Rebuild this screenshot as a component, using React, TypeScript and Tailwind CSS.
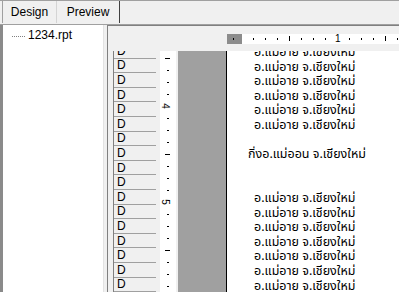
import React from "react";

const ROW_H = "h-[14.6px]";
const THAI = "อ.แม่อาย จ.เชียงใหม่";

function VRuler() {
  // tick positions relative to top of ruler (ruler starts at y=50)
  const ticks: { y: number; kind: "s" | "l" | "n"; label?: string }[] = [];
  for (let k = 0; k < 21; k++) {
    const y = 7 + k * 12;
    if (k % 8 === 0) ticks.push({ y, kind: "l" });
    else if (k % 8 === 4) ticks.push({ y, kind: "n", label: k === 4 ? "4" : k === 12 ? "5" : "6" });
    else ticks.push({ y, kind: "s" });
  }
  return (
    <div className="relative w-[16px] shrink-0 bg-white">
      {ticks.map((t, i) =>
        t.kind === "n" ? (
          <span
            key={i}
            className="absolute left-[2px] text-[10px] leading-none text-black rotate-90"
            style={{ top: t.y - 5 }}
          >
            {t.label}
          </span>
        ) : (
          <span
            key={i}
            className={`absolute h-px bg-black ${t.kind === "l" ? "left-[5px] w-[5px]" : "left-[7px] w-[2px]"}`}
            style={{ top: t.y }}
          />
        )
      )}
    </div>
  );
}

function HRuler() {
  const ticks: { x: number; kind: "s" | "l" | "n" }[] = [];
  for (let k = 1; k < 16; k++) {
    const x = k * 12;
    if (k % 8 === 0) ticks.push({ x, kind: "n" });
    else if (k % 4 === 0) ticks.push({ x, kind: "l" });
    else ticks.push({ x, kind: "s" });
  }
  return (
    <div className="flex h-[10px] mt-[8px]">
      <div className="relative w-[15px] bg-[#8c8c8c]">
        <span className="absolute left-[6px] top-[4px] h-[2px] w-px bg-black" />
      </div>
      <div className="relative flex-1 bg-white">
        {ticks.map((t, i) =>
          t.kind === "n" ? (
            <span key={i} className="absolute top-0 text-[10px] leading-[10px] text-black" style={{ left: t.x - 3 }}>
              1
            </span>
          ) : (
            <span
              key={i}
              className={`absolute w-px bg-black ${t.kind === "l" ? "top-[2px] h-[5px]" : "top-[4px] h-[2px]"}`}
              style={{ left: t.x - 1 }}
            />
          )
        )}
      </div>
    </div>
  );
}

export default function App() {
  const rows: (string | null)[] = [
    THAI, THAI, THAI, THAI, THAI, THAI, null, "กิ่งอ.แม่ออน จ.เชียงใหม่", null, null,
    THAI, THAI, THAI, THAI, THAI, THAI, THAI, THAI,
  ];
  return (
    <div className="flex h-[292px] w-[399px] flex-col overflow-hidden bg-[#f0f0f0] font-['Liberation_Sans',Tahoma,sans-serif] text-[12px] text-black">
      {/* tabs */}
      <div className="flex h-[25px] shrink-0 border-t border-[#a0a0a0] border-b border-b-[#a0a0a0]">
        <div className="ml-[2px] flex">
          <div className="flex h-[22px] w-[55px] items-center justify-center border-l border-[#a0a0a0] border-r border-r-[#d4d4d4] bg-[#f0f0f0]">
            Design
          </div>
          <div className="flex h-[22px] w-[63px] items-center justify-center border-r border-[#404040] bg-[#f0f0f0]">
            Preview
          </div>
        </div>
      </div>

      <div className="flex min-h-0 flex-1">
        {/* tree */}
        <div className="flex w-[104px] shrink-0 border-l-[3px] border-[#8a8a8a] border-r border-r-[#e3e3e3]">
          <div className="flex-1 bg-white pt-[3px] pl-[9px]">
            <div className="flex items-center gap-[3px]">
              <span className="mt-[2px] w-[13px] border-t border-dotted border-[#808080]" />
              <span className="leading-[14px]">1234.rpt</span>
            </div>
          </div>
        </div>

        {/* main */}
        <div className="ml-[3px] flex min-w-0 flex-1 flex-col border-l border-t border-[#808080]">
          <div className="flex h-[25px] shrink-0">
            <div className="w-[119px]" />
            <div className="flex-1">
              <HRuler />
            </div>
          </div>
          <div className="flex min-h-0 flex-1">
            <div className="w-[5px]" />
            {/* D column */}
            <div className="w-[47px] shrink-0 overflow-hidden border-l border-[#808080]">
              <div className="mt-[-7px]">
                {Array.from({ length: 18 }).map((_, i) => (
                  <div key={i} className={`${ROW_H} flex w-[42px] items-center border-b border-[#a0a0a0] pl-[3px] leading-none`}>
                    D
                  </div>
                ))}
              </div>
            </div>
            <VRuler />
            <div className="w-[2px]" />
            <div className="w-[48px] shrink-0 bg-[#a0a0a0]" />
            <div className="w-px bg-black" />
            {/* page */}
            <div className="min-w-0 flex-1 overflow-hidden bg-white">
              <div className="mt-[-5px] font-['Tahoma','Noto_Sans_Thai','Noto_Sans',sans-serif]">
                {rows.map((r, i) => (
                  <div
                    key={i}
                    className={`${ROW_H} whitespace-nowrap leading-[14.6px] text-[12.5px] ${i === 7 ? "pl-[21px]" : "pl-[27px]"}`}
                  >
                    {r ?? ""}
                  </div>
                ))}
              </div>
            </div>
          </div>
        </div>
      </div>
    </div>
  );
}
